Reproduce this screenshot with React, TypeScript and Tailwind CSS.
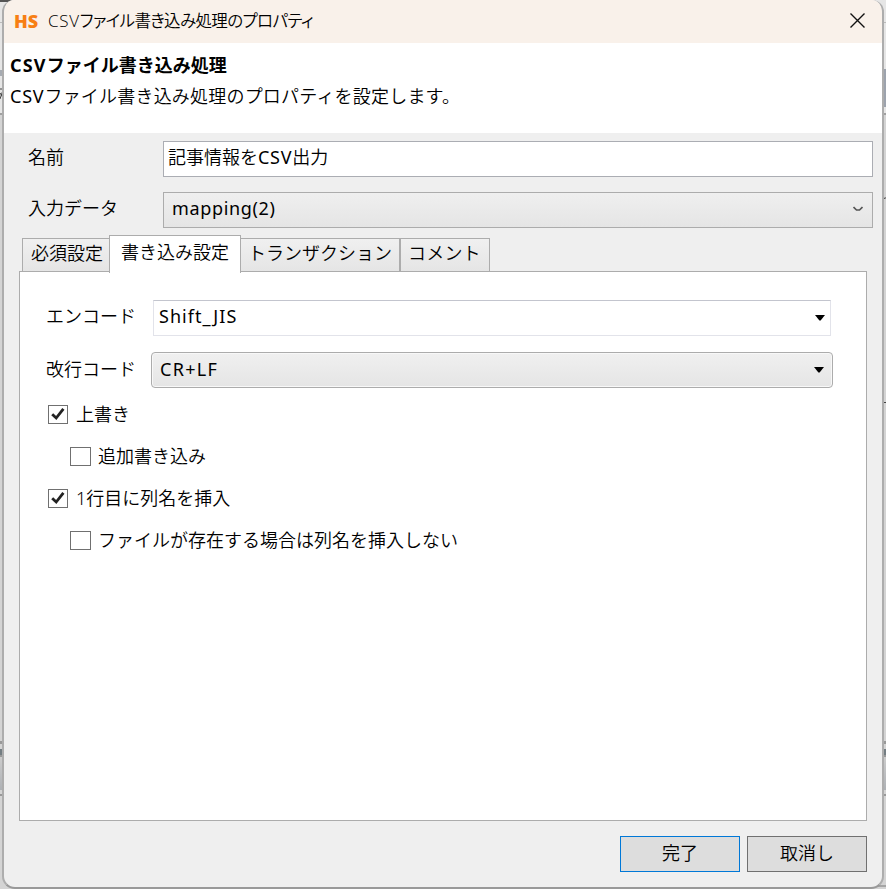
import type { ReactNode } from "react";

const FONT = "font-['Noto_Sans','Noto_Sans_CJK_JP',sans-serif]";

function Check({ checked, className, children }: { checked?: boolean; className: string; children: ReactNode }) {
  return (
    <div className={`flex h-[42px] items-center ${className}`}>
      <span className={`flex h-[19px] shrink-0 items-center justify-center border border-[#707070] bg-white ${checked ? "w-5" : "w-[21px]"}`}>
        {checked && (
          <svg width="14" height="14" viewBox="0 0 14 14" fill="none" stroke="#222" strokeWidth="2.8">
            <path d="M1.2 7.2 5.2 11 12.4 1.8" />
          </svg>
        )}
      </span>
      <span className={checked ? "ml-2" : "ml-[7px]"}>{children}</span>
    </div>
  );
}

function Triangle() {
  return (
    <svg width="10" height="6" viewBox="0 0 10 6">
      <path d="M0 0H10L5.6 5.5H4.4Z" />
    </svg>
  );
}

function Backdrop() {
  return (
    <div className="absolute inset-0 bg-[#d4d4d4]">
      <div className="absolute inset-x-0 top-0 h-[114px] bg-[#e6e6e6]" />
      <div className="absolute left-0 top-0 h-[2px] w-3 bg-[#555]" />
      <div className="absolute inset-x-0 top-[22px] h-px bg-[#bbb]" />
      <div className="absolute right-0 top-[69px] h-[38px] w-1 bg-[#9da3ad]" />
      <div className="absolute left-0 top-[70px] h-[6px] w-1 bg-[#a6abb2]" />
      <svg className="absolute left-0 top-[85px]" width="4" height="16" viewBox="0 0 4 16" stroke="#444" fill="none">
        <path d="M0 4H4M3 5 0 14M0 8 4 14" />
      </svg>
      <div className="absolute inset-x-0 top-[113px] h-[2px] bg-[#a0a0a0]" />
      <div className="absolute right-0 top-[198px] h-px w-1 rotate-[-20deg] bg-[#444]" />
      <div className="absolute right-0 top-[402px] h-px w-1 bg-[#444]" />
      <div className="absolute inset-x-0 top-[741px] h-[3px] bg-[#999]" />
      <div className="absolute inset-x-0 top-[749px] h-[6px] bg-[#747e83]" />
      <div className="absolute inset-x-0 top-[755px] h-[2px] bg-[#999]" />
      <div className="absolute inset-x-0 top-[757px] h-[33px] bg-linear-to-b from-[#ccc] to-[#aeb1b5]" />
      <div className="absolute inset-x-0 top-[794px] h-[2px] bg-[#999]" />
      <div className="absolute right-0 top-[885px] h-[2px] w-3 bg-[#a5a5a5]" />
    </div>
  );
}

export default function App() {
  return (
    <div className={`relative h-[889px] w-[886px] overflow-hidden text-[18px] font-[350] leading-[26px] whitespace-nowrap text-black ${FONT}`}>
      <Backdrop />
      <div className="relative flex h-[889px] flex-col px-[2px]">
        <div className="flex h-[889px] flex-col overflow-hidden rounded-t-[12px] rounded-b-[13px] border-x-2 border-b-2 border-[#adadad] border-b-[#999] bg-[#efefef]">
          <header className="flex h-[43px] shrink-0 items-center bg-[#f9f1ea] pr-[17px] pb-[2px] pl-[10px]">
            <span className="w-[34px] font-['Open_Sans',sans-serif] text-[18px] font-extrabold text-[#f77f14]">HS</span>
            <h1 className="font-['Open_Sans','Noto_Sans_CJK_JP',sans-serif] text-[16.5px] font-[350] tracking-[-0.62px] [font-feature-settings:'palt']"><span className="text-[17px] tracking-[0.7px]">CSV</span>ファイル書き込み処理のプロパティ</h1>
            <svg className="ml-auto" width="15" height="15" viewBox="0 0 15 15" stroke="#111" strokeWidth="1.4">
              <path d="M.5.5 14.5 14.5M14.5.5.5 14.5" />
            </svg>
          </header>

          <section className="h-[90px] shrink-0 bg-white pt-[9px] pl-[6px]">
            <h2 className="font-bold"><span className="tracking-[1.2px]">CSV</span>ファイル書き込み処理</h2>
            <p className="mt-[5px] tracking-[0.2px]"><span className="font-normal tracking-[0.8px]">CSV</span>ファイル書き込み処理のプロパティを設定します。</p>
          </section>

          <div className="flex shrink-0 flex-col gap-[15px] pt-2 pr-[9px] pl-6">
            <div className="flex h-9">
              <label className="w-[135px] pt-[3px]">名前</label>
              <div className="flex-1 border border-[#abadb3] bg-white pt-[2px] pl-1">記事情報を<span className="font-normal tracking-[0.7px]">CSV</span>出力</div>
            </div>
            <div className="flex h-9">
              <label className="w-[135px] pt-[3px]">入力データ</label>
              <div className="flex flex-1 items-center justify-between border border-[#acacac] bg-linear-to-b from-[#efefef] to-[#e5e5e5] pr-[9px] pl-2">
                <span className="pb-1 font-normal tracking-[0.65px]">mapping(2)</span>
                <svg className="mb-[2px]" width="10" height="6" viewBox="0 0 10 6" fill="none" stroke="#555" strokeWidth="1.7">
                  <path d="M.5 1 3.5 4H6.5L9.5 1" />
                </svg>
              </div>
            </div>
          </div>

          <nav className="z-10 mt-[7px] flex h-[38px] shrink-0 items-end pl-[18px]">
            <div className="mb-px h-[34px] w-[87px] border border-r-0 border-[#acacac] bg-linear-to-b from-[#f0f0f0] to-[#e5e5e5] pt-[1px] pl-2">必須設定</div>
            <div className="h-[38px] w-[132px] border border-b-0 border-[#acacac] bg-white pt-[3px] pl-[11px]">書き込み設定</div>
            <div className="mb-px h-[34px] w-[159px] border border-l-0 border-[#acacac] bg-linear-to-b from-[#f0f0f0] to-[#e5e5e5] pt-[1px] pl-[7px]">トランザクション</div>
            <div className="mb-px h-[34px] w-[90px] border border-[#acacac] bg-linear-to-b from-[#f0f0f0] to-[#e5e5e5] pt-[1px] pl-[7px] tracking-[0.2px]">コメント</div>
          </nav>

          <main className="-mt-[2px] mr-[15px] ml-[15px] h-[550px] shrink-0 border border-[#acacac] bg-white pt-7">
            <div className="flex h-9 pl-[26px]">
              <label className="w-[107px] pt-[3px]">エンコード</label>
              <div className="flex w-[678px] items-center justify-between border border-[#e2e3ea] border-t-[#c3c5ce] pr-[5px] pl-[5px]">
                <span className="pb-[5px] font-normal tracking-[1.05px]">Shift_JIS</span>
                <Triangle />
              </div>
            </div>
            <div className="mt-4 flex h-9 pl-[26px]">
              <label className="w-[105px] pt-[4px]">改行コード</label>
              <div className="flex w-[682px] items-center justify-between rounded-[4px] border border-[#acacac] bg-linear-to-b from-[#f0f0f0] to-[#e5e5e5] pr-2 pl-2 shadow-[inset_0_0_0_1px_#f8f8f8]">
                <span className="pb-[3px] font-normal tracking-[1.3px]">CR+LF</span>
                <Triangle />
              </div>
            </div>
            <div className="mt-[5px]">
              <Check checked className="pl-7">上書き</Check>
              <Check className="pl-[50px]">追加書き込み</Check>
              <Check checked className="pl-7">1行目に列名を挿入</Check>
              <Check className="pl-[50px]">ファイルが存在する場合は列名を挿入しない</Check>
            </div>
          </main>

          <footer className="mt-[15px] flex justify-end gap-[7px] pr-[15px]">
            <button className="h-9 w-[120px] border border-[#0078d7] bg-[#ddd] pb-[2px]">完了</button>
            <button className="h-9 w-[120px] border border-[#707070] bg-[#ddd] pb-[2px]">取消し</button>
          </footer>
        </div>
      </div>
    </div>
  );
}
